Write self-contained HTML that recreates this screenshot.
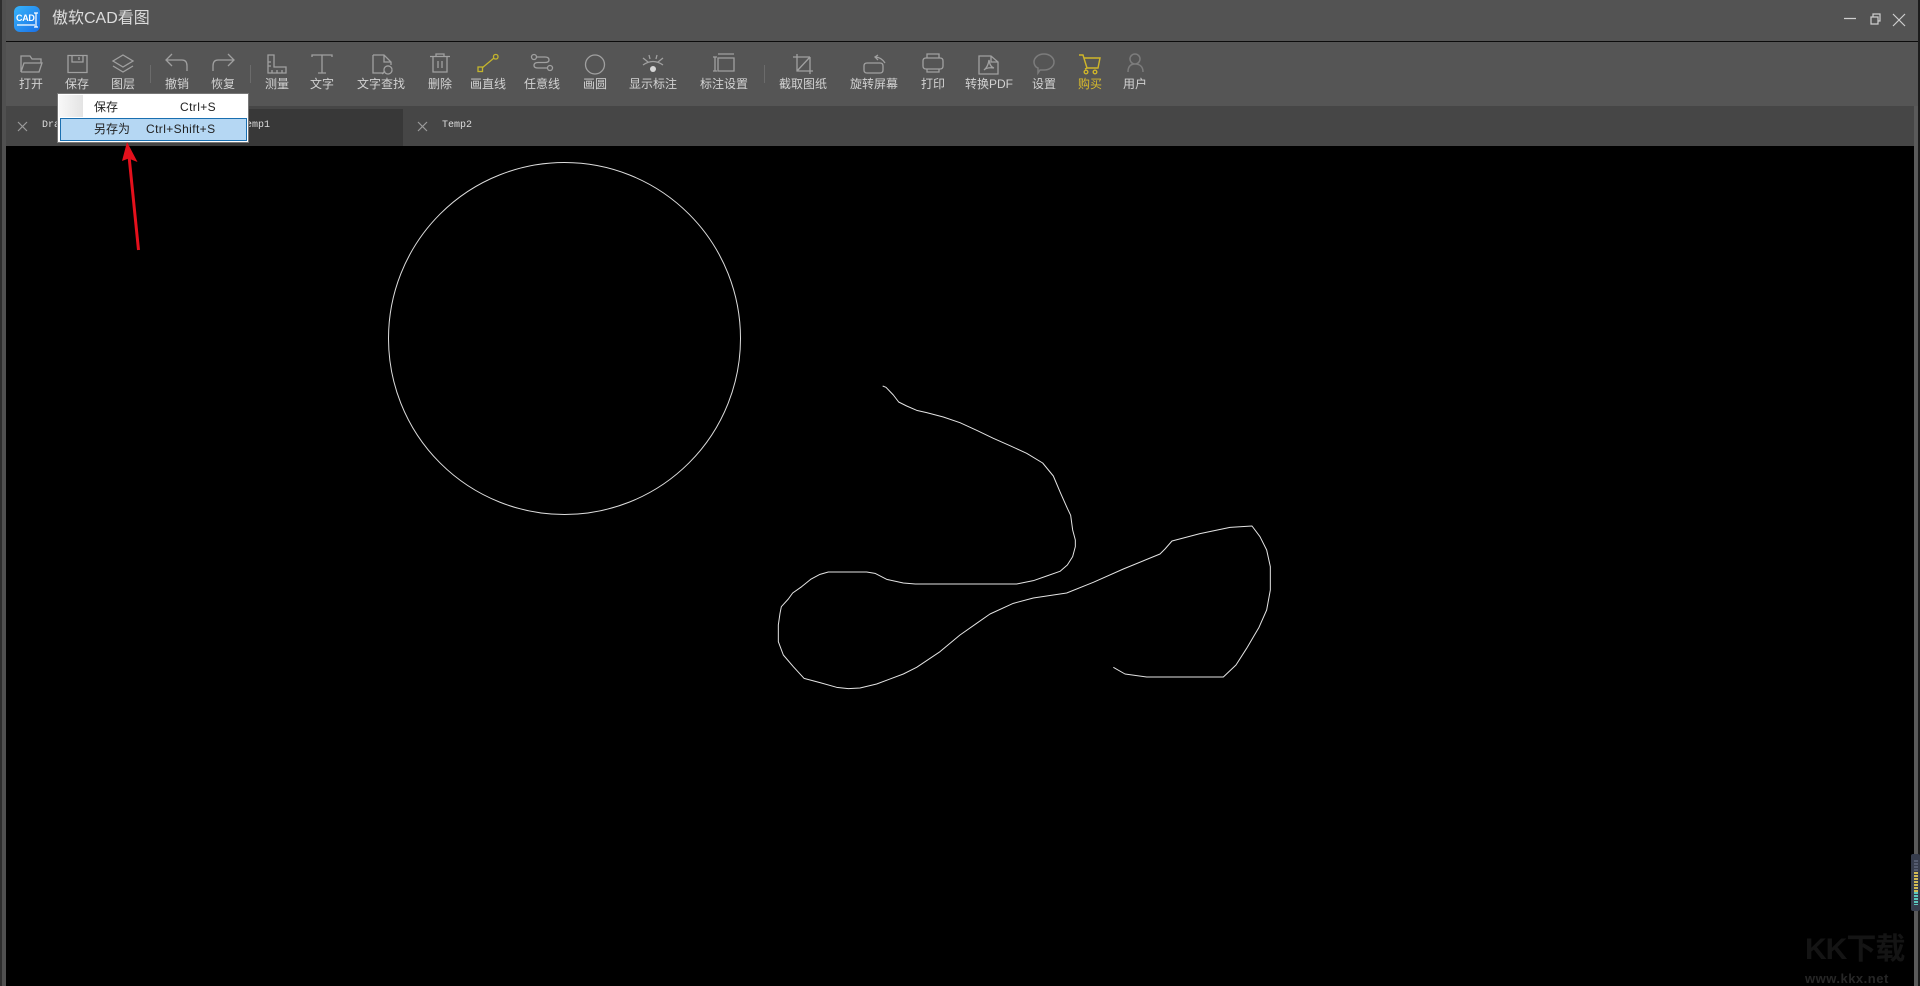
<!DOCTYPE html>
<html><head><meta charset="utf-8"><style>
html,body{margin:0;padding:0;background:#000}
#p{position:relative;width:1920px;height:986px;overflow:hidden;background:#000;font-family:"Liberation Sans","Noto Sans CJK SC",sans-serif}
#p div{position:absolute}
.l{top:76px;height:17px;line-height:17px;font-size:12px;color:#d2d2d2;white-space:nowrap;transform:translateX(-50%)}
svg{position:absolute;left:0;top:0}
.m{font-family:"Liberation Mono",monospace;font-size:10px;color:#ddd;white-space:nowrap}
.t{font-size:12px;color:#222;white-space:nowrap;line-height:16px;letter-spacing:.4px}
</style></head><body><div id="p">
<div style="left:0;top:0;width:1920px;height:41px;background:#535353"></div>
<div style="left:0;top:41px;width:1920px;height:1px;background:#0c0c0c"></div>
<div style="left:0;top:42px;width:1920px;height:64px;background:#555"></div>
<div style="left:0;top:106px;width:1920px;height:40px;background:#464646"></div>
<div style="left:200px;top:109px;width:203px;height:37px;background:#383838"></div>
<div style="left:0;top:0;width:6px;height:986px;background:#505050"></div>
<div style="left:0;top:0;width:2px;height:986px;background:#2e2e2e"></div>
<div style="left:6px;top:146px;width:1908px;height:840px;background:#000"></div>
<div style="left:1914px;top:106px;width:4px;height:880px;background:#5a5a5a"></div>
<div style="left:1918px;top:0;width:2px;height:986px;background:#1c1c1c"></div>
<div style="left:14px;top:6px;width:26px;height:26px;border-radius:6px;background:linear-gradient(135deg,#37b4fb,#1a6fe6)"></div>
<div style="left:16px;top:13px;font-size:9px;line-height:11px;font-weight:bold;color:#fff;white-space:nowrap;letter-spacing:-.3px">CAD</div>
<div style="left:52px;top:8px;height:22px;line-height:22px;font-size:16px;color:#dcdcdc;white-space:nowrap">傲软CAD看图</div>

<svg width="1920" height="986" viewBox="0 0 1920 986" fill="none">
<g stroke="#fff" stroke-width="1.200"><path d="M17 25H35M36 13V27M34 13H38M34 27H38"/></g>
<g stroke="#cfcfcf" stroke-width="1.200"><path d="M1844 18.500H1856M1871 17H1878V24H1871ZM1873 17V14H1880V21H1878M1893 14L1905 26M1905 14L1893 26"/></g>
<g stroke="#a0a0a0" stroke-width="1.300">
<path d="M21 72V56H30L32 59H41V63M21 72H39L42 63H24L21 72"/>
<path d="M68 55.500H87V72.500H68ZM72 56V62H83V56M79 57V60"/>
<path d="M123 55L133 61L123 67L113 61ZM113 66L123 72L133 66"/>
<path d="M167 60H182Q187 60 187 66V71M172 54L166 60L172 66"/>
<path d="M233 60H218Q213 60 213 66V71M228 54L234 60L228 66"/>
<path d="M268 55H274V67H286V73H268ZM268 62H271M268 66H271M272 70V73M277 70V73M282 70V73"/>
<path d="M312 57V55H332V57M322 55V73M318 73H326"/>
<path d="M373 55H384L391 62V65M384 55V62H391M373 55V73H384M392 70A4 4 0 1 1 392 69.900M385 71L382 74" />
<path d="M430 56.500H450M436 56V54H444V56M433 57V72H447V57M438 61V68M442 61V68"/>
<path d="M537 57H545Q549 57 549 60Q549 62.500 545 62.500H538Q534 62.500 534 65.500Q534 68 538 68H547"/>
<circle cx="534" cy="57" r="2.500"/><circle cx="550" cy="68" r="2.500"/>
<circle cx="595" cy="64.500" r="9.500"/>
<path d="M643 65Q653 58 663 65M643 58L648 62M649 55L650 59M657 55L656 59M663 58L658 62"/>
<path d="M715 57V71M713 57H717M713 71H717M718 54H734M718 58H734V71H718Z"/>
<path d="M793 57H810M797 54V71H813M810 57V74M797 71L810 57"/>
<path d="M867 63H880Q883 63 883 66V70Q883 73 880 73H867Q864 73 864 70V66Q864 63 867 63M878 55L875 57L878 60M875 57Q881 57 885 63"/>
<path d="M927 58V54H939V58M926 58H940Q943 58 943 61V66Q943 69 940 69H926Q923 69 923 66V61Q923 58 926 58M927 69V72H939V69"/>
<path d="M979 56H991L998 62V74H979ZM991 56V62H998M984 70Q988 67 989 60Q990 67 994 68Q987 67 984 70"/>
</g>
<g stroke="#7c7c7c" stroke-width="1.500">
<path d="M1044 54C1050 54 1054 58 1054 62C1054 67 1049 70 1044 70H1040L1038 73V68C1035 67 1034 64 1034 62C1034 58 1038 54 1044 54Z"/>
<path d="M1128 72C1128 66 1131 64 1135 64C1139 64 1143 66 1143 72M1135 64A5 5 0 1 0 1135 54A5 5 0 1 0 1135 64"/>
</g>
<g stroke="#c4b52c" stroke-width="1.300">
<path d="M482 68L494 58"/><rect x="478" y="67" width="4.500" height="4.500"/><rect x="493.500" y="54.500" width="4.500" height="4.500" rx="2"/>
</g>
<circle cx="653" cy="69" r="3" fill="#d6d6d6"/>
<g stroke="#d0b62a" stroke-width="1.400">
<path d="M1079 55H1083L1087 68H1098L1100 58H1084M1087 68L1085 69"/><circle cx="1086" cy="72" r="1.800"/><circle cx="1095" cy="72" r="1.800"/>
</g>
<g stroke="#6b6b6b"><path d="M150.500 65V83M250.500 65V83M764.500 65V83"/></g>
<g stroke="#9a9a9a" stroke-width="1.200"><path d="M18 122L27 131M27 122L18 131M418 122L427 131M427 122L418 131"/></g>

<circle cx="564.500" cy="338.500" r="176" stroke="#ddd" stroke-width="1"/>
<g transform="translate(760 370) scale(.33333)">
<path vector-effect="non-scaling-stroke" stroke="#e4e4e4" stroke-width="1" stroke-linejoin="round" d="M368 48L378 52L400 75L416 96L440 108L470 121L500 128L550 141L600 158L650 181L700 205L750 227L800 250L848 279L880 318L902 370L922 415L932 436L938 480L946 510V530L938 560L922 585L900 604L860 618L820 632L770 642H466L430 639L380 628L345 610L320 606H205L180 613L152 628L125 650L98 669L85 687L64 710L60 730L55 765V815L70 855L100 890L132 925L180 938L230 952L265 956L300 954L350 942L430 912L470 892L540 845L600 795L650 760L690 732L760 700L820 684L920 669L1000 637L1090 597L1200 552L1215 537L1236 513L1320 491L1410 472L1476 468L1500 500L1520 540L1531 590V660L1520 720L1497 772L1460 835L1428 885L1390 921H1160L1095 912L1060 892"/>
</g>
</svg>

<div class="l" style="left:31px">打开</div>
<div class="l" style="left:77px">保存</div>
<div class="l" style="left:123px">图层</div>
<div class="l" style="left:177px">撤销</div>
<div class="l" style="left:223px">恢复</div>
<div class="l" style="left:277px">测量</div>
<div class="l" style="left:322px">文字</div>
<div class="l" style="left:381px">文字查找</div>
<div class="l" style="left:440px">删除</div>
<div class="l" style="left:488px">画直线</div>
<div class="l" style="left:542px">任意线</div>
<div class="l" style="left:595px">画圆</div>
<div class="l" style="left:653px">显示标注</div>
<div class="l" style="left:724px">标注设置</div>
<div class="l" style="left:803px">截取图纸</div>
<div class="l" style="left:874px">旋转屏幕</div>
<div class="l" style="left:933px">打印</div>
<div class="l" style="left:989px">转换PDF</div>
<div class="l" style="left:1044px">设置</div>
<div class="l" style="left:1090px;color:#d8bb2c">购买</div>
<div class="l" style="left:1135px">用户</div>

<div class="m" style="left:42px;top:120px">Drawing1</div>
<div class="m" style="left:240px;top:120px">Temp1</div>
<div class="m" style="left:442px;top:120px">Temp2</div>

<div style="left:58px;top:94px;width:190px;height:48px;background:#fff;box-shadow:0 0 0 1px #777"></div>
<div style="left:59px;top:95px;width:24px;height:22px;background:linear-gradient(90deg,#f8f8f8,#e4e4e4)"></div>
<div style="left:60px;top:118px;width:185px;height:21px;background:#b5d7f3;border:1px solid #1a6fb0"></div>
<div class="t" style="left:94px;top:99px;letter-spacing:0">保存</div>
<div class="t" style="left:180px;top:99px">Ctrl+S</div>
<div class="t" style="left:94px;top:121px;letter-spacing:0">另存为</div>
<div class="t" style="left:146px;top:121px">Ctrl+Shift+S</div>

<svg width="1920" height="986" viewBox="0 0 1920 986" fill="none">
<path d="M127 142L137.500 162L128.500 158.500L122 161Z" fill="#e4101c"/>
<path d="M129 156L138.500 250" stroke="#e4101c" stroke-width="3"/>
<rect x="1911" y="854" width="9" height="57" rx="2" fill="#363c4c"/>
<path d="M1916 872V892" stroke="#d2bb55" stroke-width="4" stroke-dasharray="2 1"/>
<path d="M1916 892V905" stroke="#5cc8bd" stroke-width="4" stroke-dasharray="2 1"/>
<path d="M1916 860V872" stroke="#555c70" stroke-width="4" stroke-dasharray="2 1"/>
</svg>
<div style="left:1805px;top:932px;font-size:30px;font-weight:bold;color:#141414;white-space:nowrap;line-height:36px;letter-spacing:-1px">KK下载</div>
<div style="left:1805px;top:972px;font-size:13px;font-weight:bold;color:#262626;white-space:nowrap;line-height:14px;letter-spacing:.5px">www.kkx.net</div>
</div></body></html>
